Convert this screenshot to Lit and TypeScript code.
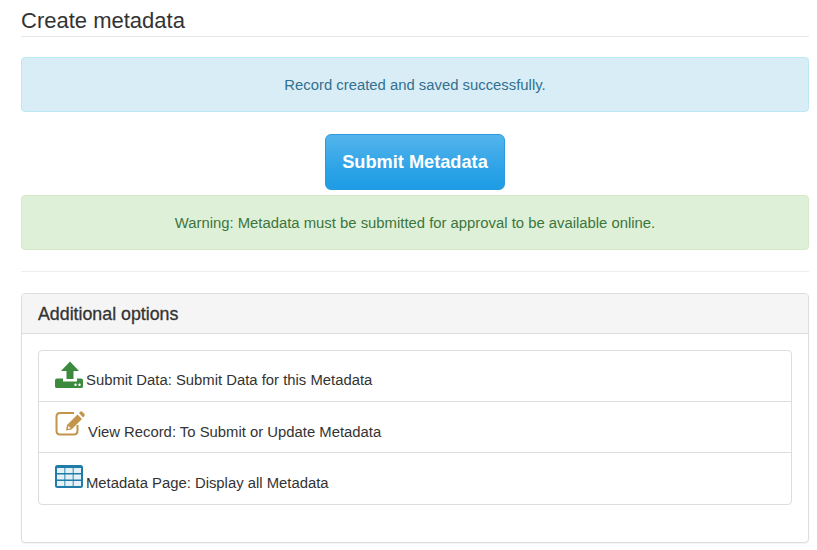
import { LitElement, css, html } from "lit";
import { customElement } from "lit/decorators.js";

const uploadIcon = html`<svg class="icon" width="28" height="28" viewBox="0 0 28 28">
  <path fill="#3c8a3e" d="M15 0.500 L24 10 H18.500 V18 H11.500 V10 H6 Z" />
  <path fill="#3c8a3e" d="M2 17.500 H8 V20.500 H22 V17.500 H26 Q28 17.500 28 19.500 V25.500 Q28 27 26 27 H2 Q0 27 0 25.500 V19.500 Q0 17.500 2 17.500 Z" />
  <circle cx="20.500" cy="23.800" r="1.200" fill="#fff" />
  <circle cx="24.500" cy="23.800" r="1.200" fill="#fff" />
</svg>`;

const editIcon = html`<svg class="icon" width="30" height="25" viewBox="0 0 30 25">
  <path fill="none" stroke="#c2954a" stroke-width="2" d="M19 2 H5 Q1.500 2 1.500 5.500 V19.500 Q1.500 23.500 5 23.500 H19 Q22.500 23.500 22.500 19.500 V14" />
  <path fill="#c2954a" d="M22.500 3.500 L27 8 L16.500 18.500 L11 19.500 L12 14 Z" />
  <path fill="#c2954a" d="M24 2 L25.500 0.500 Q26.500 0 27.500 1 L29.500 3 Q30 4 29.500 5 L28 6.500 Z" />
  <path fill="#fff" d="M13.500 15 L15.800 17.300 L12.800 18 Z" />
</svg>`;

const tableIcon = html`<svg class="icon" width="28" height="23" viewBox="0 0 28 23">
  <rect width="28" height="23" rx="2.500" fill="#1f7ca8" />
  <g fill="#e6f1f7">
    <rect x="2" y="3" width="7.400" height="5" />
    <rect x="10.300" y="3" width="7.400" height="5" />
    <rect x="18.600" y="3" width="7.400" height="5" />
    <rect x="2" y="9.500" width="7.400" height="5" />
    <rect x="10.300" y="9.500" width="7.400" height="5" />
    <rect x="18.600" y="9.500" width="7.400" height="5" />
    <rect x="2" y="16" width="7.400" height="5" />
    <rect x="10.300" y="16" width="7.400" height="5" />
    <rect x="18.600" y="16" width="7.400" height="5" />
  </g>
</svg>`;

@customElement("app-root")
export class AppRoot extends LitElement {
  static styles = css`
    :host {
      display: block;
      box-sizing: border-box;
      height: 550px;
      overflow: hidden;
      padding: 0 8px 0 21px;
      background: #fff;
      font-family: "Liberation Sans", Arial, sans-serif;
      font-size: 14.85px;
      color: #333;
    }

    .title {
      box-sizing: border-box;
      height: 37px;
      margin: 0 0 20px;
      padding-top: 8px;
      border-bottom: 1px solid #e6e6e6;
      font-size: 22px;
      font-weight: 400;
      line-height: 26px;
    }

    .alert {
      display: flex;
      align-items: center;
      justify-content: center;
      box-sizing: border-box;
      height: 55px;
      border: 1px solid;
      border-radius: 4px;
    }

    .info {
      background: #d9edf7;
      border-color: #bce8f1;
      color: #31708f;
    }

    .success {
      background: #dff0d8;
      border-color: #d6e9c6;
      color: #3c763d;
    }

    .action {
      display: flex;
      justify-content: center;
      margin: 22px 0 5px;
    }

    .submit {
      box-sizing: border-box;
      width: 180px;
      height: 56px;
      border: 1px solid #2a9be0;
      border-radius: 6px;
      background: linear-gradient(#54b4eb, #2fa4e7 60%, #1d9ce5);
      color: #fff;
      font: 700 18.2px "Liberation Sans", Arial, sans-serif;
    }

    .rule {
      margin: 21px 0;
      border: 0;
      border-top: 1px solid #eee;
    }

    .panel {
      box-sizing: border-box;
      height: 250px;
      border: 1px solid #ddd;
      border-radius: 4px;
      box-shadow: 0 1px 1px rgba(0, 0, 0, 0.05);
    }

    .panel-heading {
      box-sizing: border-box;
      height: 40px;
      padding: 2px 16px 0;
      display: flex;
      align-items: center;
      background: #f5f5f5;
      border-bottom: 1px solid #ddd;
      border-radius: 3px 3px 0 0;
      font-size: 17.8px;
      -webkit-text-stroke: 0.3px #333;
    }

    .panel-body {
      padding: 16px;
    }

    .list {
      border: 1px solid #ddd;
      border-radius: 4px;
    }

    .item {
      box-sizing: border-box;
      height: 51px;
      padding: 0 16px;
      display: flex;
      align-items: flex-end;
      gap: 3px;
      font-size: 14.85px;
      line-height: 16px;
      border-bottom: 1px solid #ddd;
    }

    .item:last-child {
      border-bottom: 0;
    }

    .icon {
      display: block;
      flex: none;
    }

    .item.upload {
      padding-bottom: 13px;
    }

    .item.upload .icon {
      margin-bottom: -1px;
    }

    .item.edit {
      padding-bottom: 12px;
    }

    .item.edit .icon {
      margin-bottom: 4px;
    }

    .item.table {
      padding-bottom: 13px;
    }

    .item.table .icon {
      margin-bottom: 3px;
    }
  `;

  render() {
    return html`
      <h1 class="title">Create metadata</h1>
      <div class="alert info">Record created and saved successfully.</div>
      <div class="action"><button class="submit">Submit Metadata</button></div>
      <div class="alert success">Warning: Metadata must be submitted for approval to be available online.</div>
      <hr class="rule" />
      <section class="panel">
        <div class="panel-heading">Additional options</div>
        <div class="panel-body">
          <div class="list">
            <div class="item upload">${uploadIcon}<span>Submit Data: Submit Data for this Metadata</span></div>
            <div class="item edit">${editIcon}<span>View Record: To Submit or Update Metadata</span></div>
            <div class="item table">${tableIcon}<span>Metadata Page: Display all Metadata</span></div>
          </div>
        </div>
      </section>
    `;
  }
}
